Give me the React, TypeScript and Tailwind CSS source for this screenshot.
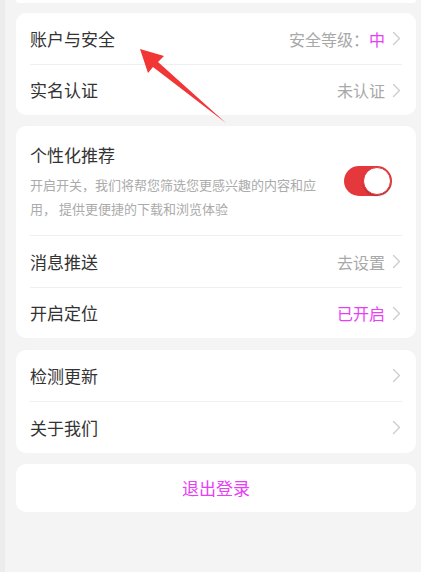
import React from "react";

const Chevron = () => (
  <svg width="9" height="15" viewBox="0 0 9 15" className="ml-[7px] shrink-0">
    <path d="M1.5 1.5 L7.5 7.5 L1.5 13.5" fill="none" stroke="#cccccc" strokeWidth="1.3" strokeLinecap="round" strokeLinejoin="round" />
  </svg>
);

const Divider = () => <div className="mx-[14px] h-px bg-[#efefef]" />;

const Row = ({ title, value, valueClass = "text-[#a8a8a8]", h = "h-[51px]" }: { title: string; value?: React.ReactNode; valueClass?: string; h?: string }) => (
  <div className={`flex items-center justify-between pl-[14px] pr-[15px] ${h}`}>
    <span className="text-[17px] text-[#333333]">{title}</span>
    <span className="flex items-center">
      {value !== undefined && <span className={`text-[16px] ${valueClass}`}>{value}</span>}
      <Chevron />
    </span>
  </div>
);

export default function App() {
  return (
    <div
      className="relative w-[421px] h-[572px] overflow-hidden bg-[#f4f4f4] border-l-[5px] border-[#ececec]"
      style={{ fontFamily: '"Noto Sans CJK SC", "Noto Sans", sans-serif' }}
    >
      <div className="ml-[11px] mr-[5px] flex flex-col">
        <div className="h-[3px] bg-white rounded-b-[10px]" />
        <div className="mt-[10px] bg-white rounded-[10px]">
          <Row
            title="账户与安全"
            value={
              <>
                安全等级：<span className="text-[#e83ef7]">中</span>
              </>
            }
          />
          <Divider />
          <Row title="实名认证" value="未认证" h="h-[50px]" />
        </div>
        <div className="mt-[11px] bg-white rounded-[10px]">
          <div className="flex items-start justify-between pl-[14px] pr-[24px] pt-[15px] h-[109px]">
            <div className="flex flex-col">
              <span className="text-[17px] leading-[28px] text-[#333333]">个性化推荐</span>
              <p className="mt-[4px] w-[290px] text-[13px] leading-[24px] text-[#ababab]">
                开启开关，我们将帮您筛选您更感兴趣的内容和应用，&nbsp;提供更便捷的下载和浏览体验
              </p>
            </div>
            <div className="mt-[25px] w-[48px] h-[30px] rounded-full bg-[#e5383c] flex items-center justify-end pr-[1px] shrink-0">
              <div className="w-[28px] h-[28px] rounded-full bg-white border border-[#e5383c] shadow-[0_1px_2px_rgba(0,0,0,0.25)]" />
            </div>
          </div>
          <Divider />
          <Row title="消息推送" value="去设置" h="h-[51px]" />
          <Divider />
          <Row title="开启定位" value="已开启" valueClass="text-[#e83ef7]" h="h-[50px]" />
        </div>
        <div className="mt-[12px] bg-white rounded-[10px]">
          <Row title="检测更新" />
          <Divider />
          <Row title="关于我们" h="h-[51px]" />
        </div>
        <div className="mt-[11px] h-[48px] bg-white rounded-[10px] flex items-center justify-center">
          <span className="text-[17px] text-[#e83ef7]">退出登录</span>
        </div>
      </div>
      <svg className="absolute left-0 top-0 pointer-events-none" width="421" height="572" viewBox="0 0 421 572">
        <polygon points="135,49 159,56 153,62 221,123 148,67 143,73" fill="#f23535" />
      </svg>
    </div>
  );
}
